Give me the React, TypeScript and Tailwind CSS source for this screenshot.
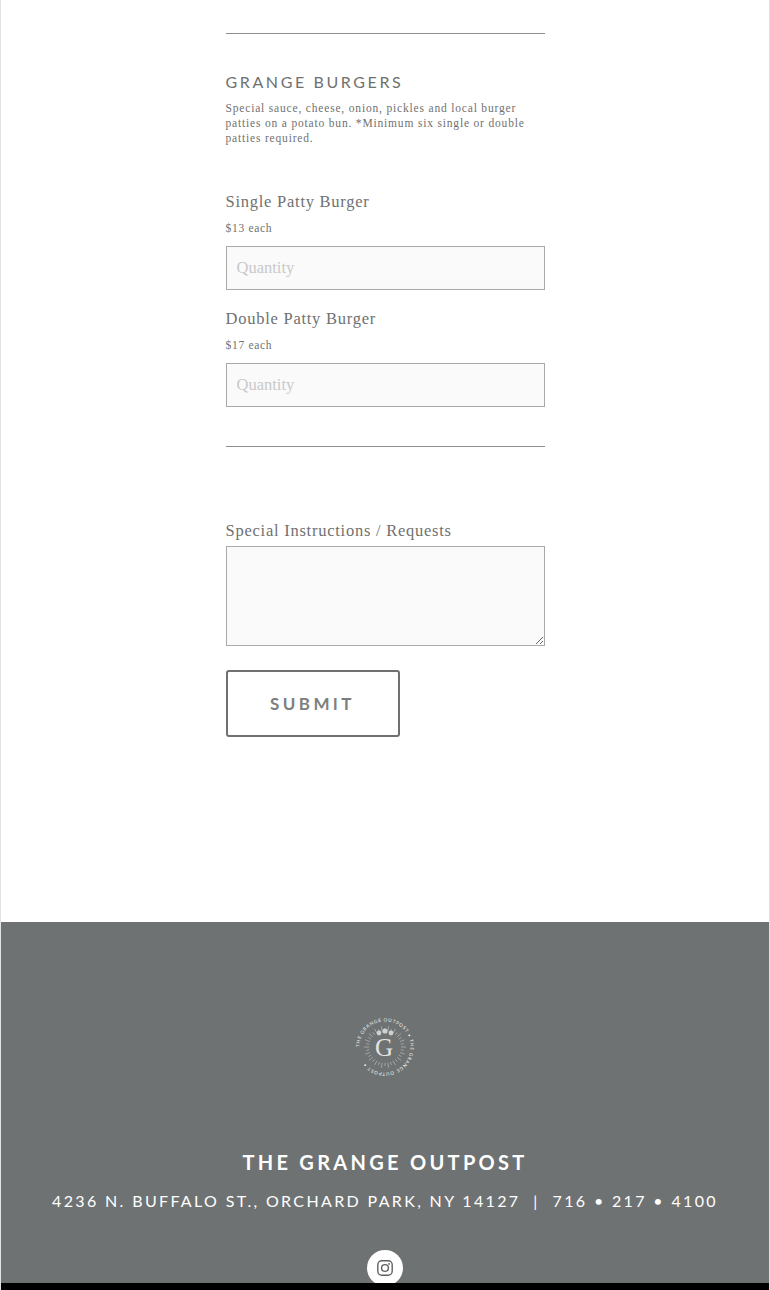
import React from "react";

const serif = "font-['Liberation_Serif',serif]";
const sans = "font-['Lato',sans-serif]";

function Logo() {
  const rays = Array.from({ length: 36 }, (_, i) => (i * Math.PI) / 18);
  return (
    <svg width="60" height="60" viewBox="0 0 60 60" className="block">
      <defs>
        <path id="ring" d="M30 30 m-25.5 0 a25.5 25.5 0 1 1 51 0 a25.5 25.5 0 1 1 -51 0" />
      </defs>
      <text fontSize="4.6" fill="#f2f2f2" fontFamily="Lato, sans-serif" letterSpacing="0.75">
        <textPath href="#ring" startOffset="0">THE GRANGE OUTPOST • THE GRANGE OUTPOST •</textPath>
      </text>
      {rays.map((a, i) => (
        <line
          key={i}
          x1={30 + Math.cos(a) * 16}
          y1={30 + Math.sin(a) * 16}
          x2={30 + Math.cos(a) * (i % 2 ? 19 : 21)}
          y2={30 + Math.sin(a) * (i % 2 ? 19 : 21)}
          stroke="#d8d8d8"
          strokeWidth="0.5"
        />
      ))}
      <circle cx="24" cy="16" r="2.4" fill="#d0d0d0" />
      <circle cx="30" cy="14" r="2.6" fill="#d0d0d0" />
      <circle cx="36" cy="16" r="2.4" fill="#d0d0d0" />
      <text x="29" y="39" textAnchor="middle" fontFamily="Liberation Serif, serif" fontSize="25" fill="#e4e4e4">G</text>
    </svg>
  );
}

function Instagram() {
  return (
    <svg width="16" height="16" viewBox="0 0 16 16" fill="none" stroke="#5f6161" strokeWidth="1.4">
      <rect x="0.8" y="0.8" width="14.4" height="14.4" rx="4" />
      <circle cx="8" cy="8" r="3.4" />
      <circle cx="12.1" cy="3.9" r="0.9" fill="#5f6161" stroke="none" />
    </svg>
  );
}

function Item({ name, price }: { name: string; price: string }) {
  return (
    <div>
      <div className={`${serif} text-[16.5px] leading-[20px] tracking-[0.75px] text-[#6f7171]`}>{name}</div>
      <div className={`${serif} mt-[9px] text-[11.5px] leading-[15px] tracking-[0.7px] text-[#6f7171]`}>{price}</div>
      <input
        placeholder="Quantity"
        className={`${serif} mt-[10px] block h-[44px] w-full border border-[#a9a9a9] bg-[#fafafa] px-[10px] text-[16.5px] placeholder:text-[#c9c9c9]`}
      />
    </div>
  );
}

export default function App() {
  return (
    <div className="relative h-[1290px] overflow-hidden border-x border-[#e3e3e3] bg-white">
      <main className="mx-auto h-[922px] w-[319px] pt-[33px]">
        <hr className="border-0 border-t border-[#8f8f8f]" />
        <h2 className={`${sans} mt-[38px] text-[16px] font-normal leading-[20px] tracking-[2.6px] text-[#6f7171]`}>GRANGE BURGERS</h2>
        <p className={`${serif} mt-[9px] text-[11.5px] leading-[15px] tracking-[0.82px] text-[#6f7171]`}>
          Special sauce, cheese, onion, pickles and local burger patties on a potato bun. *Minimum six single or double patties required.
        </p>
        <div className="mt-[46px] flex flex-col gap-[19px]">
          <Item name="Single Patty Burger" price="$13 each" />
          <Item name="Double Patty Burger" price="$17 each" />
        </div>
        <hr className="mt-[39px] border-0 border-t border-[#8f8f8f]" />
        <label className={`${serif} mt-[74px] block text-[16.5px] leading-[20px] tracking-[0.75px] text-[#6f7171]`}>Special Instructions / Requests</label>
        <textarea className="mt-[5px] block h-[100px] w-full border border-[#a9a9a9] bg-[#fafafa]" />
        <button className={`${sans} mt-[24px] block h-[67px] w-[174px] rounded-[3px] border-2 border-[#6f7171] bg-white text-[17px] font-bold tracking-[3.4px] text-[#7d7f7f]`}>SUBMIT</button>
      </main>
      <footer className="flex h-[368px] flex-col items-center bg-[#6f7272] pt-[95px] text-white">
        <Logo />
        <div className={`${sans} mt-[72px] text-[20px] font-bold leading-[26px] tracking-[3.3px]`}>THE GRANGE OUTPOST</div>
        <div className={`${sans} mt-[16px] text-[16px] leading-[20px] tracking-[2.35px]`}>4236 N. BUFFALO ST., ORCHARD PARK, NY 14127 &nbsp;|&nbsp; 716 • 217 • 4100</div>
        <div className="mt-[39px] flex h-[36px] w-[36px] items-center justify-center rounded-full bg-white">
          <Instagram />
        </div>
      </footer>
      <div className="absolute inset-x-[-1px] bottom-0 h-[7px] bg-black" />
    </div>
  );
}
